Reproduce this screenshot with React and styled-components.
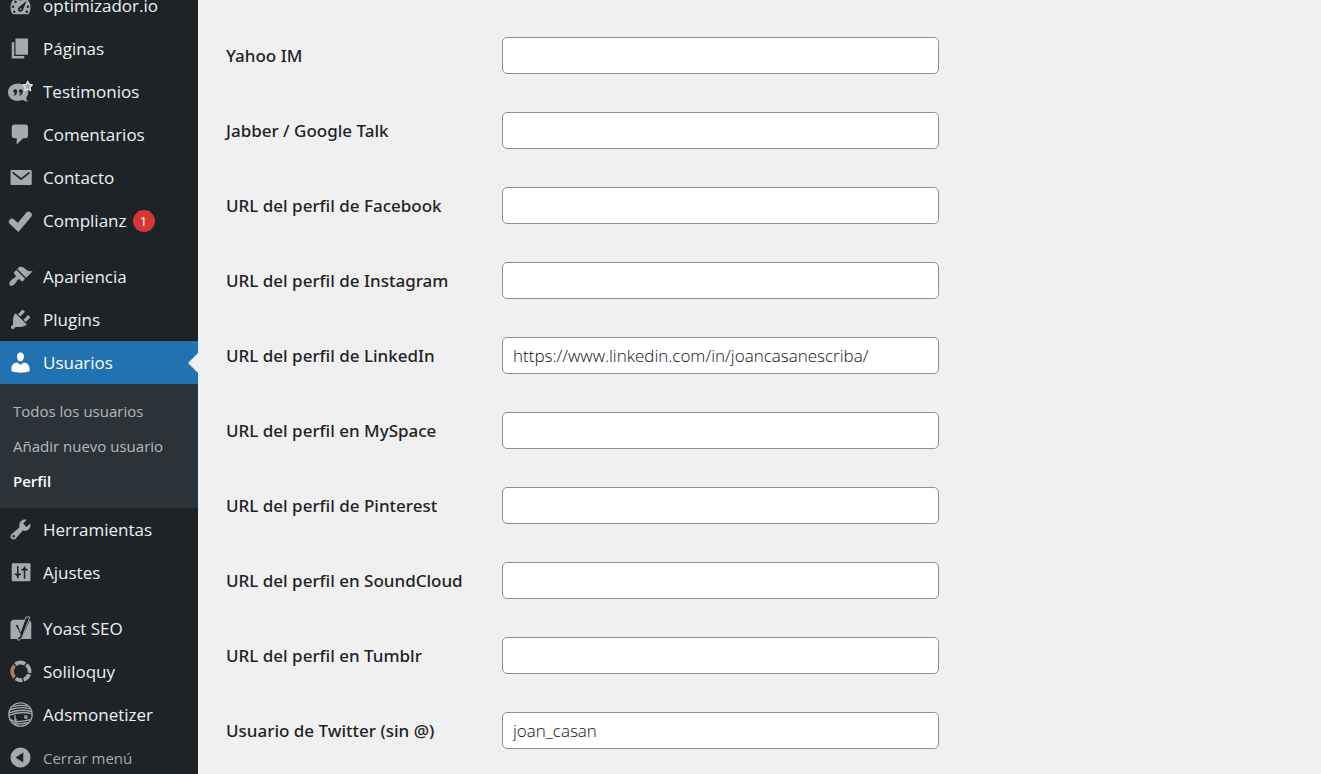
import React from 'react';
import styled, { createGlobalStyle, css } from 'styled-components';

const GlobalStyle = createGlobalStyle`
  * {
    box-sizing: border-box;
  }

  body {
    margin: 0;
    background: #f0f0f0;
    color: #1d2327;
    font-family: 'Segoe UI', 'Open Sans', 'Noto Sans', sans-serif;
    font-size: 17px;
  }
`;

const Layout = styled.div`
  display: flex;
  height: 100vh;
  overflow: hidden;
`;

const Sidebar = styled.nav`
  flex: 0 0 198px;
  background: #1d2327;
`;

// the menu is scrolled a little past its first entry
const Menu = styled.ul`
  margin: -16px 0 0;
  padding: 0;
  list-style: none;
`;

const Separator = styled.li`
  height: 13px;
`;

const itemStyles = css`
  position: relative;
  display: flex;
  align-items: center;
  gap: 10px;
  width: 100%;
  height: 43px;
  padding: 0 0 0 8px;
  font-size: 17px;
  line-height: 24px;
  white-space: nowrap;

  svg {
    flex: none;
  }
`;

const ItemLink = styled.a`
  ${itemStyles}
  color: ${({ $current }) => ($current ? '#fff' : '#f0f0f1')};
  background: ${({ $current }) => ($current ? '#2271b1' : 'transparent')};
  text-decoration: none;

  svg {
    color: ${({ $current }) => ($current ? '#fff' : '#a7aaad')};
  }

  ${({ $current }) =>
    $current &&
    css`
      &::after {
        content: '';
        position: absolute;
        top: calc(50% - 10px);
        right: 0;
        border: 10px solid transparent;
        border-left-width: 0;
        border-right-color: #f0f0f0;
      }
    `}
`;

const CollapseButton = styled.button`
  ${itemStyles}
  border: 0;
  background: none;
  color: #a7aaad;
  font-family: inherit;
  font-size: 15px;
`;

const Badge = styled.span`
  display: flex;
  align-items: center;
  justify-content: center;
  width: 22px;
  height: 22px;
  margin-left: -4px;
  border-radius: 50%;
  background: #d63638;
  color: #fff;
  font-size: 13px;
`;

const SubMenu = styled.ul`
  margin: 0;
  padding: 10px 0 9px;
  list-style: none;
  background: #2c3338;
`;

const SubLink = styled.a`
  display: block;
  padding: 0 13px;
  color: ${({ $current }) => ($current ? '#fff' : '#b4b9be')};
  font-size: 15px;
  font-weight: ${({ $current }) => ($current ? 600 : 400)};
  line-height: 35px;
  text-decoration: none;
  white-space: nowrap;
`;

const Form = styled.form`
  flex: 1;
  min-width: 0;
  padding: 18px 28px 0;
`;

const Field = styled.div`
  display: grid;
  grid-template-columns: 276px minmax(0, 437px);
  align-items: center;
  height: 75px;
`;

const Label = styled.label`
  font-family: 'Segoe UI', 'Noto Sans', sans-serif;
  font-size: 17px;
  font-weight: 500;
  line-height: 24px;
`;

const Input = styled.input`
  width: 100%;
  height: 37px;
  padding: 0 10px;
  border: 1px solid #8c8f94;
  border-radius: 5px;
  background: #fff;
  color: #0c0f12;
  font-family: inherit;
  font-size: 17px;
  font-weight: 300;
`;

const Icon = ({ children }) => (
  <svg width="25" height="25" viewBox="0 0 20 20" fill="currentColor" aria-hidden="true">
    {children}
  </svg>
);

const DARK = '#1d2327';

const icons = {
  dashboard: (
    <Icon>
      <path d="M3.76 17h12.48c1.1-1.52 1.76-3.4 1.76-5.43C18 6.48 14.42 3 10 3S2 6.48 2 11.57c0 2.03.66 3.91 1.76 5.43z" />
      <g fill={DARK}>
        <circle cx="10" cy="5" r="1" />
        <circle cx="6" cy="7" r="1" />
        <circle cx="4" cy="11" r="1" />
        <circle cx="5" cy="15" r="1" />
        <circle cx="16" cy="11" r="1" />
        <circle cx="15" cy="15" r="1" />
        <path d="M14.9 6.1l-3 7.4a2 2 0 1 1-2.9-2.3z" />
      </g>
      <circle cx="10.1" cy="12.9" r=".7" />
    </Icon>
  ),
  pages: (
    <Icon>
      <path d="M6 15V2h10v13H6zm-1 1h8v2H3V5h2v11z" />
    </Icon>
  ),
  testimonials: (
    <Icon>
      <path d="M8 3.6c4.6 0 8.2 2.9 8.2 6.9 0 1.7-.6 3.2-1.6 4.4.1 1.3.6 2.3 1.5 3-1.7.1-3.3-.4-4.3-1.3-1.1.5-2.4.8-3.8.8-4.6 0-8-2.9-8-6.9S3.4 3.6 8 3.6z" />
      <g fill={DARK}>
        <path d="M5.8 8.2a1.6 1.6 0 0 1 1.6 1.7c0 1.9-1.1 3-2.7 3.5l-.3-.7c.8-.4 1.2-.8 1.3-1.5a1.5 1.5 0 0 1 .1-3z" />
        <path d="M10.2 8.2a1.6 1.6 0 0 1 1.6 1.7c0 1.9-1.1 3-2.7 3.5l-.3-.7c.8-.4 1.2-.8 1.3-1.5a1.5 1.5 0 0 1 .1-3z" />
      </g>
      <path
        d="M15.8 1.8l1.2 2.5 2.5.4-1.8 1.9.4 2.7-2.3-1.3-2.4 1.3.4-2.7-1.8-1.9 2.6-.4z"
        stroke="#e4e5e6"
        strokeLinejoin="round"
      />
    </Icon>
  ),
  comments: (
    <Icon>
      <path d="M5 2h9c1.1 0 2 .9 2 2v7c0 1.1-.9 2-2 2h-2l-5 5v-5H5c-1.1 0-2-.9-2-2V4c0-1.1.9-2 2-2z" />
    </Icon>
  ),
  mail: (
    <Icon>
      <path d="M3.3 4h14.4c.9 0 1.3.4 1.3 1.3v9.400c0 .9-.4 1.300-1.300 1.300H3.300c-.9 0-1.300-.4-1.300-1.300V5.300C2 4.400 2.400 4 3.300 4z" />
      <path d="M4.200 6.300l6.300 5 6.300-5" fill="none" stroke={DARK} strokeWidth="1.500" strokeLinecap="round" />
    </Icon>
  ),
  check: (
    <Icon>
      <path d="M3.200 11l4.900 4.500L16.500 5.500" fill="none" stroke="currentColor" strokeWidth="5" strokeLinecap="round" />
    </Icon>
  ),
  brush: (
    <Icon>
      <path d="M14.480 11.060L7.410 3.990l1.500-1.500c.5-.56 2.300-.47 3.510.32 1.210.8 1.430 1.280 2.910 2.100 1.180.64 2.450 1.260 4.450.85zm-.71.71L6.700 4.700 4.930 6.470c-.39.39-.39 1.020 0 1.410l1.060 1.060c.39.39.39 1.030 0 1.420-.6.6-1.430 1.110-2.210 1.690-.35.26-.7.53-1.010.84C1.430 14.230.4 16.080 1.400 17.070c.99 1 2.840-.03 4.180-1.360.31-.31.58-.66.85-1.020.57-.78 1.080-1.610 1.690-2.210.39-.39 1.020-.39 1.410 0l1.060 1.060c.39.39 1.020.39 1.410 0z" />
    </Icon>
  ),
  plug: (
    <Icon>
      <path d="M13.110 4.360L9.870 7.600 8 5.730l3.240-3.240c.35-.34 1.050-.2 1.560.32.52.51.66 1.210.31 1.550zm-8 1.770l.91-1.120 9.010 9.010-1.190.84c-.71.71-2.630 1.160-3.820 1.160H6.140L4.900 17.260c-.59.59-1.540.59-2.120 0-.59-.58-.59-1.530 0-2.120l1.240-1.240v-3.880c0-1.130.4-3.190 1.090-3.890zm7.260 3.970l3.240-3.240c.34-.35 1.040-.21 1.550.31.52.51.66 1.210.31 1.550l-3.240 3.250z" />
    </Icon>
  ),
  user: (
    <Icon>
      <path d="M10 9.250c-2.270 0-2.730-3.440-2.730-3.440C7 4.020 7.820 2 9.970 2c2.160 0 2.980 2.020 2.710 3.810 0 0-.41 3.440-2.680 3.440zm0 2.570L12.720 10c2.390 0 4.520 2.330 4.520 4.530v2.490s-3.650 1.130-7.240 1.130c-3.650 0-7.240-1.130-7.240-1.130v-2.490c0-2.250 1.940-4.480 4.470-4.480z" />
    </Icon>
  ),
  wrench: (
    <Icon>
      <path d="M16.680 9.770c-1.340 1.340-3.300 1.670-4.950.99l-5.410 6.520c-.99.99-2.590.99-3.580 0s-.99-2.590 0-3.570l6.520-5.420c-.68-1.650-.35-3.610.99-4.950 1.280-1.280 3.120-1.620 4.720-1.060l-2.890 2.890 2.820 2.820 2.860-2.870c.53 1.580.18 3.390-1.080 4.650zM3.810 16.210c.4.39 1.040.39 1.430 0 .4-.4.4-1.040 0-1.430-.39-.4-1.030-.4-1.430 0-.39.39-.39 1.030 0 1.430z" />
    </Icon>
  ),
  sliders: (
    <Icon>
      <rect x="3" y="2.500" width="15" height="14.500" rx="1" />
      <path
        d="M7.800 5.200v9M13.200 5.600v9M5.700 11.400h4.200M11.100 7.800h4.200"
        fill="none"
        stroke={DARK}
        strokeWidth="1.200"
        strokeLinecap="round"
      />
      <path d="M5.700 11.400h4.200l-2.100 2.200zM11.100 7.800h4.200l-2.100-2.200z" fill={DARK} />
    </Icon>
  ),
  yoast: (
    <Icon>
      <path d="M4.800 3h10.800L9.800 18.300H2V5.800C2 4.100 3.100 3 4.800 3z" />
      <path d="M17.400 3.500c.8.500 1.200 1.300 1.200 2.300v12.500h-7.700z" />
      <path
        d="M5.400 6.800h2.500l2.200 5.600 4.200-11.600h3.200l-5.800 15.300c-.9 2.300-2 3.200-4 3.200v-2c1.200-.2 1.800-.8 2-1.800.1-.6 0-1.100-.2-1.600z"
        fill={DARK}
        stroke="currentColor"
        strokeWidth=".8"
      />
    </Icon>
  ),
  soliloquy: (
    <Icon>
      <g fill="none" strokeWidth="3">
        <path d="M5.900 4.300a7 7 0 0 1 7.800-.4" stroke="currentColor" />
        <path d="M14.600 4.600a7 7 0 0 1 2.600 6.500" stroke="currentColor" />
        <path d="M16.900 12.200a7 7 0 0 1-4.400 4.400" stroke="currentColor" />
        <path d="M11.500 16.900a7 7 0 0 1-5.300-1.300" stroke="currentColor" />
        <path d="M5.200 14.800a7 7 0 0 1 0-9.600" stroke="#b5795d" />
      </g>
    </Icon>
  ),
  adsmonetizer: (
    <Icon>
      <g fill="none" stroke="currentColor" strokeWidth="1.100">
        <circle cx="10" cy="10" r="9.300" />
        <path d="M2 6.200c5-2 10.500-2.100 15.600-.9M1 8.700c5.800-2.400 12-2.700 17.800-1M1 10.700c5.500-2.400 12.200-2.900 18-1.200" />
        <path d="M4 3.700c3.700-1.100 7.800-1.200 11.500-.5" />
        <path d="M5.600 10.500v3.900h1.500M13.600 10.300v2.600h1.500v-2.400" />
        <path d="M1.900 13.500c1.200 1.600 3 2.300 5 2.300 3.600.1 7-.5 11-1.700M4 17c3.900.8 8.100.6 12-.4" />
      </g>
    </Icon>
  ),
  collapse: (
    <Icon>
      <path
        fillRule="evenodd"
        d="M10 2a8 8 0 1 1 0 16 8 8 0 0 1 0-16zm2.200 4L6 10l6.200 4z"
      />
    </Icon>
  ),
};

const users = [
  { label: 'Todos los usuarios' },
  { label: 'Añadir nuevo usuario' },
  { label: 'Perfil', current: true },
];

const menu = [
  { label: 'optimizador.io', icon: 'dashboard' },
  { label: 'Páginas', icon: 'pages' },
  { label: 'Testimonios', icon: 'testimonials' },
  { label: 'Comentarios', icon: 'comments' },
  { label: 'Contacto', icon: 'mail' },
  { label: 'Complianz', icon: 'check', count: 1 },
  null,
  { label: 'Apariencia', icon: 'brush' },
  { label: 'Plugins', icon: 'plug' },
  { label: 'Usuarios', icon: 'user', children: users },
  { label: 'Herramientas', icon: 'wrench' },
  { label: 'Ajustes', icon: 'sliders' },
  null,
  { label: 'Yoast SEO', icon: 'yoast' },
  { label: 'Soliloquy', icon: 'soliloquy' },
  { label: 'Adsmonetizer', icon: 'adsmonetizer' },
];

const fields = [
  { id: 'yim', label: 'Yahoo IM' },
  { id: 'jabber', label: 'Jabber / Google Talk' },
  { id: 'facebook', label: 'URL del perfil de Facebook' },
  { id: 'instagram', label: 'URL del perfil de Instagram' },
  { id: 'linkedin', label: 'URL del perfil de LinkedIn', value: 'https://www.linkedin.com/in/joancasanescriba/' },
  { id: 'myspace', label: 'URL del perfil en MySpace' },
  { id: 'pinterest', label: 'URL del perfil de Pinterest' },
  { id: 'soundcloud', label: 'URL del perfil en SoundCloud' },
  { id: 'tumblr', label: 'URL del perfil en Tumblr' },
  { id: 'twitter', label: 'Usuario de Twitter (sin @)', value: 'joan_casan' },
];

const MenuItem = ({ label, icon, count, children }) => (
  <li>
    <ItemLink href="#" $current={!!children}>
      {icons[icon]}
      {label}
      {count && <Badge>{count}</Badge>}
    </ItemLink>
    {children && (
      <SubMenu>
        {children.map(sub => (
          <li key={sub.label}>
            <SubLink href="#" $current={sub.current}>{sub.label}</SubLink>
          </li>
        ))}
      </SubMenu>
    )}
  </li>
);

export default () => (
  <Layout>
    <GlobalStyle />
    <Sidebar>
      <Menu>
        {menu.map((item, i) => (item ? <MenuItem key={item.label} {...item} /> : <Separator key={i} />))}
        <li>
          <CollapseButton type="button">
            {icons.collapse}
            Cerrar menú
          </CollapseButton>
        </li>
      </Menu>
    </Sidebar>
    <Form>
      {fields.map(({ id, label, value }) => (
        <Field key={id}>
          <Label htmlFor={id}>{label}</Label>
          <Input type="text" id={id} name={id} defaultValue={value} />
        </Field>
      ))}
    </Form>
  </Layout>
)
